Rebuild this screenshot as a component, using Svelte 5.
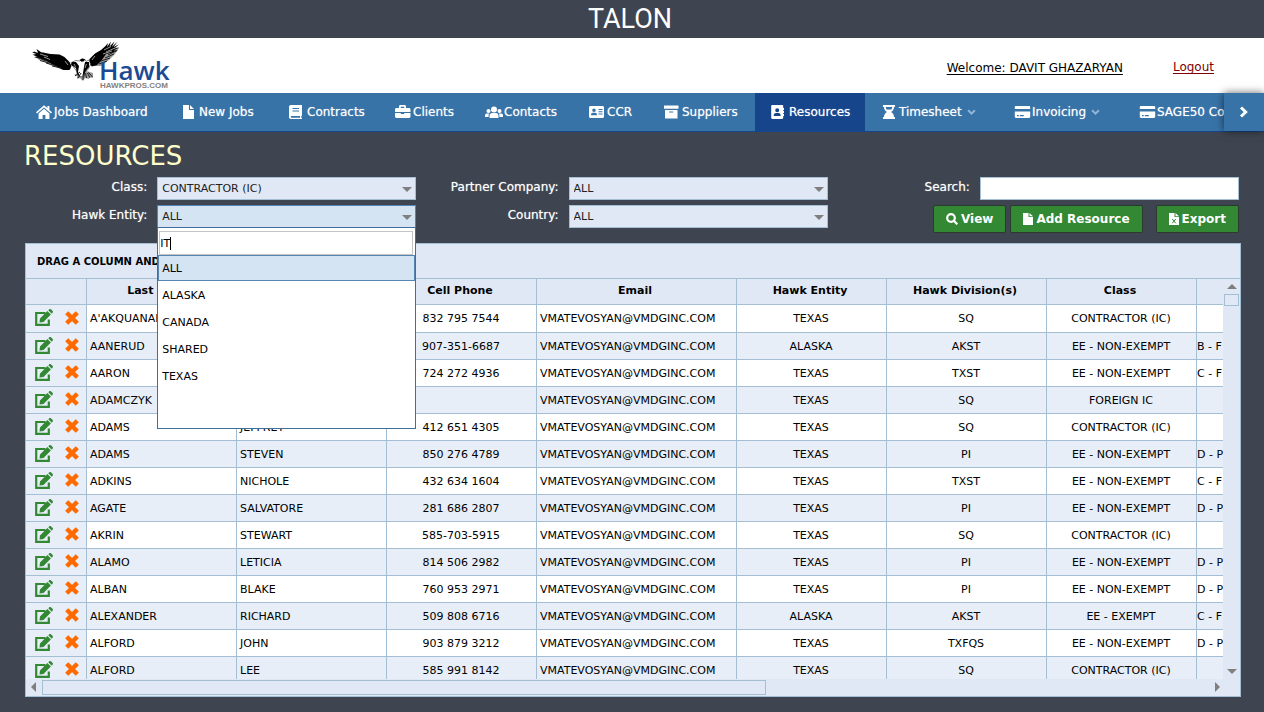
<script>
  const nav = [
    { label: 'Jobs Dashboard', icon: 'home' },
    { label: 'New Jobs', icon: 'file' },
    { label: 'Contracts', icon: 'book' },
    { label: 'Clients', icon: 'briefcase' },
    { label: 'Contacts', icon: 'users' },
    { label: 'CCR', icon: 'idcard' },
    { label: 'Suppliers', icon: 'archive' },
    { label: 'Resources', icon: 'address', active: true },
    { label: 'Timesheet', icon: 'hourglass', menu: true },
    { label: 'Invoicing', icon: 'card', menu: true },
    { label: 'SAGE50 Connector', icon: 'card' }
  ];

  const entities = ['ALL', 'ALASKA', 'CANADA', 'SHARED', 'TEXAS'];
  const email = 'VMATEVOSYAN@VMDGINC.COM';
  const IC = 'CONTRACTOR (IC)';
  const NE = 'EE - NON-EXEMPT';

  const rows = [
    ["A'AKQUANAHANN", '', '832 795 7544', 'TEXAS', 'SQ', IC, ''],
    ['AANERUD', '', '907-351-6687', 'ALASKA', 'AKST', NE, 'B - F'],
    ['AARON', '', '724 272 4936', 'TEXAS', 'TXST', NE, 'C - F'],
    ['ADAMCZYK', '', '', 'TEXAS', 'SQ', 'FOREIGN IC', ''],
    ['ADAMS', 'JEFFREY', '412 651 4305', 'TEXAS', 'SQ', IC, ''],
    ['ADAMS', 'STEVEN', '850 276 4789', 'TEXAS', 'PI', NE, 'D - P'],
    ['ADKINS', 'NICHOLE', '432 634 1604', 'TEXAS', 'TXST', NE, 'C - F'],
    ['AGATE', 'SALVATORE', '281 686 2807', 'TEXAS', 'PI', NE, 'D - P'],
    ['AKRIN', 'STEWART', '585-703-5915', 'TEXAS', 'SQ', IC, ''],
    ['ALAMO', 'LETICIA', '814 506 2982', 'TEXAS', 'PI', NE, 'D - P'],
    ['ALBAN', 'BLAKE', '760 953 2971', 'TEXAS', 'PI', NE, 'D - P'],
    ['ALEXANDER', 'RICHARD', '509 808 6716', 'ALASKA', 'AKST', 'EE - EXEMPT', 'C - F'],
    ['ALFORD', 'JOHN', '903 879 3212', 'TEXAS', 'TXFQS', NE, 'D - P'],
    ['ALFORD', 'LEE', '585 991 8142', 'TEXAS', 'SQ', IC, '']
  ];

  let filter = $state('IT');
</script>

{#snippet icon(name)}
  <svg class="icon" viewBox="0 0 18 16" aria-hidden="true">
    {#if name === 'home'}
      <path d="M9 1.2 1 8.2l1 1.2 7-6 7 6 1-1.2-2.600-2.300V2h-2v2.100z" />
      <path d="M9 4.800 3.600 9.400V15h4v-4h2.800v4h4V9.400z" />
    {:else if name === 'file'}
      <path d="M3 1h6v5h5v9H3zM10 1l4 4h-4z" />
    {:else if name === 'book'}
      <path fill-rule="evenodd" d="M3 1h11v10.600l-.7.6v1.600l.7.4v.8H3c-1.400 0-2-1-2-2V3c0-1.200.7-2 2-2zm1.500 3v1H11V4zm0 2.500v1H11v-1zM3.500 12c-1 0-1 1.800 0 1.800H12V12z" />
    {:else if name === 'briefcase'}
      <path fill-rule="evenodd" d="M5 4V2.500C5 1.700 5.600 1 6.500 1h4c.9 0 1.500.7 1.500 1.500V4h3c1 0 1.500.6 1.500 1.500V8H1V5.500C1 4.600 1.600 4 2.500 4zm1.800 0h3.400V2.700H6.800zM1 9h5.800v1h3.400V9h6.300v3.600c0 .9-.6 1.400-1.500 1.400H2.500c-.9 0-1.500-.5-1.500-1.400z" />
    {:else if name === 'users'}
      <circle cx="9" cy="5.500" r="3" /><circle cx="3.500" cy="7" r="2" /><circle cx="14.500" cy="7" r="2" />
      <path d="M4.500 14v-2c0-2 1.300-3 2.500-3h4c1.200 0 2.500 1 2.500 3v2zM0 13v-1.500c0-1.400.9-2 2-2h2.300C3.700 10.200 3.600 11 3.600 13zM18 13v-1.500c0-1.400-.9-2-2-2h-2.300c.6.7.7 1.500.7 3.500z" />
    {:else if name === 'idcard'}
      <path fill-rule="evenodd" d="M2.500 2h12c.9 0 1.500.6 1.500 1.500v9c0 .9-.6 1.500-1.500 1.500h-12c-.9 0-1.500-.6-1.500-1.500v-9C1 2.600 1.600 2 2.500 2zM6 4.500a1.800 1.800 0 1 0 0 3.600 1.800 1.800 0 0 0 0-3.600zM3 11.200h6c0-1.600-.8-2.400-1.800-2.400H4.800C3.800 8.800 3 9.600 3 11.200zM10.500 5v1h4V5zm0 2.200v1h4v-1zm0 2.300v1h4v-1z" />
    {:else if name === 'archive'}
      <path fill-rule="evenodd" d="M1 1.500h14.500v3.200H1zM2 6h12.500v8.500H2zm4.200 1.500v1h4v-1z" />
    {:else if name === 'address'}
      <path fill-rule="evenodd" d="M2.500 1h9.500c.8 0 1.200.5 1.200 1.200V4h.8v2h-.8v1h.8v2h-.8v1h.8v2h-.8v1.800c0 .7-.4 1.200-1.200 1.200H2.500c-.8 0-1.300-.5-1.300-1.200V2.200C1.200 1.500 1.700 1 2.500 1zm4.700 3.200a2 2 0 1 0 0 4 2 2 0 0 0 0-4zM3.700 12h7c0-2-.8-3-2.200-3H5.900c-1.400 0-2.200 1-2.200 3z" />
    {:else if name === 'hourglass'}
      <path d="M3 1h12v2h-1c0 2.500-1.300 4-3 5 1.700 1 3 2.500 3 5h1v2H3v-2h1c0-2.500 1.300-4 3-5C5.300 7 4 5.500 4 3H3z" />
      <path class="cut" d="M5.800 3h6.400c0 1-.3 1.700-.7 2.400h-5C6.100 4.700 5.800 4 5.800 3z" />
    {:else if name === 'card'}
      <path fill-rule="evenodd" d="M3 2h13c.7 0 1.200.5 1.200 1.200V5H1.800V3.200C1.800 2.500 2.300 2 3 2zM1.800 7.500h15.400v5.300c0 .7-.5 1.200-1.200 1.200H3c-.7 0-1.200-.5-1.200-1.200zM4 11v1.200h1.700V11zm2.800 0v1.200h4V11z" />
    {/if}
  </svg>
{/snippet}

{#snippet chevron()}
  <svg class="chevron" viewBox="0 0 8 6" aria-hidden="true"><path d="M1 1l3 3 3-3" /></svg>
{/snippet}

<div class="page">
  <header class="brand">TALON</header>

  <div class="account">
    <svg class="logo" viewBox="32 40 140 50" role="img" aria-label="Hawk">
      <path class="soft" d="M34 55l5 5 6 2 5 3 6 2 7 3 8-1-2-6-14-7-12-4zM93 66l8 0 8-6 6-6 4-6-6-1-12 3-6 8zM74 75l9-5 10 3 0 5-4-1 0 2-4-1-2 3-3-3-3 1 0-3z" />
      <path d="M33 51.500l5 1.200-1.500-3.700 5 3.500 9 1.500 9 .5 5 2.500 5 5 2 4-2 4-6 0-9-4.500-9-5-6-2-5.500-1.300 3.500-.8-5-1.600 3.800-.8-4.700-1.800 4-.4z" />
      <path d="M89 64l.5-5 5.500-5.500 6-3.500 4-3.500 3-3.500-1 4 4-5.500-1.500 5 5-5-2.500 5.200 5.500-5-4 5.500 5.500-3-5 4.500 5.500-1.500-6 3.300 4.500 0-6 2.300-6 1.200-2 3-3 4-4 4-5 1.500z" />
      <path class="body" d="M71 62.500l5-2 4 .5 2-2 3 .5 1 2 3-1.500 1.500 4-2 5-4 3-2 5-4-1-2-5-3-4z" />
      <path d="M72 62l4 0 3 4-1 6 2 5-3-3-1-6-5-3zM85 62l4 0 0 5-4 5-1 6-1-5 1-6zM79.500 60l2.500-1.500 3 .7-1 2-2.500.5z" />
      <path class="mark" d="M75 76l5-4M78 78l3-5M83 80l.2-6M86.500 78l-1-5M90 78l-2.500-5M92.500 77l-4-4.500M37 57l9 4M40 60.500l9 2.500M46 63l9 2.500M52 66l9 2M101 61l9-3M99 64l8-3M105 58l9-4M108 55l9-4.500" />
      <path class="plume" d="M40 54l8 2.500M44 57l6 2.500M74 64l1.500 3M86.500 64l-1.500 4M104 50l7-3.500M106 52l9-4M103 54l9-3M92 60l3-4M65 61l3 4" />
      <text class="name" x="99" y="80">Hawk</text>
      <text class="site" x="100" y="88">HAWKPROS.COM</text>
    </svg>
    <a class="welcome" href="#profile">Welcome: DAVIT GHAZARYAN</a>
    <a class="logout" href="#logout">Logout</a>
  </div>

  <nav>
    <div class="items">
      {#each nav as item}
        <a href="#{item.icon}" class:active={item.active}>
          {@render icon(item.icon)}<span>{item.label}</span>
          {#if item.menu}{@render chevron()}{/if}
        </a>
      {/each}
    </div>
    <button class="more" aria-label="Scroll menu">
      <svg viewBox="0 0 10 12" aria-hidden="true"><path d="M2 1.500L6.700 6 2 10.500" /></svg>
    </button>
  </nav>

  <main>
    <h1>RESOURCES</h1>

    <div class="filters">
      <div class="field">
        <label for="class">Class:</label>
        <div class="combo"><select id="class"><option>CONTRACTOR (IC)</option></select></div>
      </div>
      <div class="field">
        <label for="partner">Partner Company:</label>
        <div class="combo"><select id="partner"><option>ALL</option></select></div>
      </div>
      <div class="field">
        <label for="search">Search:</label>
        <input id="search" type="text" />
      </div>
      <div class="field">
        <label for="entity">Hawk Entity:</label>
        <div class="combo open">
          <select id="entity"><option>ALL</option></select>
          <div class="popup">
            <div class="find">
              <input type="text" aria-label="Filter entities" bind:value={filter} /><span class="caret"></span>
            </div>
            <ul role="listbox" aria-label="Hawk Entity">
              {#each entities as entity, i}
                <li role="option" aria-selected={i === 0}>{entity}</li>
              {/each}
            </ul>
          </div>
        </div>
      </div>
      <div class="field">
        <label for="country">Country:</label>
        <div class="combo"><select id="country"><option>ALL</option></select></div>
      </div>
      <div class="actions">
        <button>
          <svg viewBox="0 0 12 12" aria-hidden="true"><circle class="lens" cx="5" cy="5" r="3.800" /><path class="lens" d="M7.800 7.800l3.500 3.500" /></svg>View
        </button>
        <button>
          <svg class="sheet" viewBox="0 0 10 12" aria-hidden="true"><path d="M0 0h5.500v4H10v8H0zM6.500 0L10 3.200H6.500z" /></svg>Add Resource
        </button>
        <button class="export">
          <svg class="sheet" viewBox="0 0 10 12" aria-hidden="true"><path d="M0 0h5.500v4H10v8H0zM6.500 0L10 3.200H6.500z" /><path class="x" d="M3.200 6l3.600 4.300M6.800 6l-3.600 4.300" /></svg>Export
        </button>
      </div>
    </div>

    <section class="grid">
      <div class="group">DRAG A COLUMN AND DROP IT HERE TO GROUP BY THAT COLUMN</div>
      <div class="body">
        <div class="view">
          <table>
            <colgroup>
              <col class="tools" /><col class="mid" /><col class="mid" /><col class="mid" /><col class="wide" />
              <col class="mid" /><col class="division" /><col class="mid" /><col class="mid" />
            </colgroup>
            <thead>
              <tr>
                <th aria-label="Actions"></th>
                <th>Last Name</th><th>First Name</th><th>Cell Phone</th><th>Email</th>
                <th>Hawk Entity</th><th>Hawk Division(s)</th><th>Class</th><th></th>
              </tr>
            </thead>
            <tbody>
              {#each rows as [last, first, phone, entity, division, kind, plan]}
                <tr>
                  <td class="tools">
                    <div>
                      <button class="edit" aria-label="Edit">
                        <svg viewBox="0 0 18 17" aria-hidden="true">
                          <path class="box" d="M10.500 4H1.200v11.800h12.600v-5.300" />
                          <path d="M5 9.500L12.400 2.100l3.500 3.500L8.500 13 4.500 13.500zM13.300 1.200L14.300.2q.8-.6 1.600.1L17.700 2q.6.8 0 1.500L16.800 4.700z" />
                        </svg>
                      </button>
                      <button class="remove" aria-label="Delete">
                        <svg viewBox="0 0 14 14" aria-hidden="true"><path d="M1.700 1.700l10.600 10.600M12.300 1.700L1.700 12.300" /></svg>
                      </button>
                    </div>
                  </td>
                  <td>{last}</td><td>{first}</td><td class="c">{phone}</td><td>{email}</td>
                  <td class="c">{entity}</td><td class="c">{division}</td><td class="c">{kind}</td><td class="plan">{plan}</td>
                </tr>
              {/each}
            </tbody>
          </table>
        </div>
        <div class="vbar">
          <button class="up" aria-label="Scroll up"></button>
          <div class="thumb"></div>
          <button class="down" aria-label="Scroll down"></button>
        </div>
      </div>
      <div class="hbar">
        <button class="left" aria-label="Scroll left"></button>
        <div class="track"><div class="thumb"></div></div>
        <button class="right" aria-label="Scroll right"></button>
      </div>
    </section>
  </main>
</div>

<style>
  :global(body) { background: #3f4550; }
  * { box-sizing: border-box; }
  .page {
    --line: #a4bed4;
    --panel: #e0e8f5;
    height: 100vh;
    display: flex;
    flex-direction: column;
    background: #3f4550;
    font: 11px Verdana, "DejaVu Sans", sans-serif;
    color: #000;
  }
  button { border: 0; padding: 0; background: none; font: inherit; color: inherit; }
  a { color: inherit; }

  .brand {
    height: 38px;
    line-height: 38px;
    text-align: center;
    color: #fff;
    font-family: Roboto, sans-serif;
    font-size: 27px;
    padding-right: 4px;
  }
  .account {
    height: 55px;
    padding: 2px 50px 0 32px;
    display: flex;
    align-items: flex-start;
    background: #fff;
    font-size: 12px;
    line-height: 16px;
  }
  .logo { width: 140px; height: 50px; margin-right: auto; }
  .logo .soft { fill: #9a9a9a; }
  .logo .body { fill: #fff; stroke: #333; stroke-width: 0.6; }
  .logo .mark { fill: none; stroke: #222; stroke-width: 1; }
  .logo .plume { fill: none; stroke: #bbb; stroke-width: 0.8; }
  .name { font: 600 26px "Open Sans", sans-serif; fill: #1c4a94; }
  .site { font: bold 8px "Liberation Sans", sans-serif; fill: #857f80; }
  .welcome, .logout { text-underline-offset: 2px; }
  .welcome { margin: 20px 50px 0 0; }
  .logout { margin-top: 19px; color: #800000; }

  nav {
    height: 39px;
    flex: none;
    display: flex;
    background: #3873a8;
    border-bottom: 1px solid #16458c;
    color: #fff;
    font-size: 12px;
    text-shadow: 0 0 1px #fff9;
  }
  .items {
    flex: 1;
    min-width: 0;
    overflow: hidden;
    padding-left: 20px;
    display: grid;
    grid-template-columns: 145px 108px 106px 91px 103px 75px 107px 110px 133px 125px 170px;
  }
  .items a {
    display: flex;
    align-items: center;
    padding: 0 0 0 15px;
    text-decoration: none;
    white-space: nowrap;
  }
  .items a.active { background: #16458c; }
  .icon { width: 18px; height: 16px; margin-right: 1px; flex: none; fill: #fff; }
  .icon .cut { fill: #3873a8; }
  .chevron { width: 9px; height: 7px; margin-left: 5px; fill: none; stroke: #8fb6d8; stroke-width: 1.8; }
  .more {
    width: 40px;
    display: grid;
    place-items: center;
    box-shadow: 0 0 8px #0009;
    background: #3873a8;
  }
  .more svg { width: 10px; height: 12px; fill: none; stroke: #fff; stroke-width: 3; }

  main { flex: 1; min-height: 0; display: flex; flex-direction: column; }
  h1 {
    margin: 0;
    padding: 3px 24px 0;
    font-size: 26px;
    font-weight: normal;
    line-height: 42px;
    color: #ffffcc;
  }
  .filters {
    display: grid;
    grid-template-columns: repeat(3, 1fr);
    row-gap: 5px;
    padding: 0 25px 10px 5px;
    align-items: start;
  }
  .field { display: grid; grid-template-columns: 1fr 63%; column-gap: 10px; }
  .field label {
    line-height: 21px;
    text-align: right;
    color: #fff;
    font-size: 12px;
    text-shadow: 0 0 1px #fff9;
  }
  .combo { position: relative; }
  .combo::after {
    content: "";
    position: absolute;
    right: 4px;
    top: 10px;
    border: 5px solid transparent;
    border-top-color: #7f7f7f;
    border-bottom: 0;
    pointer-events: none;
  }
  select, #search {
    display: block;
    width: 100%;
    height: 23px;
    margin: 0;
    padding: 0 4px;
    border: 1px solid var(--line);
    border-radius: 0;
    background: var(--panel);
    appearance: none;
    font: inherit;
    color: #222;
  }
  #search { background: #fff; }
  .open select { background: #d5e4f3; border-color: #5585b0; }
  .popup {
    position: absolute;
    z-index: 2;
    top: 22px;
    left: 0;
    right: 0;
    height: 202px;
    background: #fff;
    border: 1px solid #3f7099;
  }
  .find {
    display: flex;
    align-items: center;
    height: 24px;
    margin: 3px 2px 0 1px;
    border: 1px solid #c4c4c4;
  }
  .find input {
    field-sizing: content;
    border: 0;
    padding: 0;
    outline: 0;
    font: inherit;
    color: #000;
  }
  .caret { width: 1px; height: 13px; background: #000; }
  ul { margin: 0; padding: 0; list-style: none; }
  li { height: 25px; margin-bottom: 2px; border: 1px solid transparent; line-height: 25px; padding-left: 3px; }
  li[aria-selected="true"] { height: 26px; margin-bottom: 1px; background: #d5e4f3; border-color: #5585b0; }

  .actions { display: flex; justify-content: flex-end; gap: 4px; }
  .actions button {
    height: 28px;
    display: flex;
    align-items: center;
    gap: 3px;
    padding: 0 12px;
    border: 1px solid #2b3a2d;
    border-radius: 2px;
    background: #338833;
    color: #fff;
    font-size: 12px;
    font-weight: bold;
  }
  .actions .export { margin-left: 9px; }
  .actions svg { width: 12px; height: 12px; fill: #fff; }
  .actions svg.sheet { width: 10px; }
  .actions .lens { fill: none; stroke: #fff; stroke-width: 2.200; }
  .actions .x { fill: none; stroke: #338833; stroke-width: 1; }

  .grid {
    flex: 1;
    min-height: 0;
    display: flex;
    flex-direction: column;
    margin: 0 23px 15px 25px;
    border: 1px solid var(--line);
    background: var(--panel);
  }
  .group {
    flex: none;
    height: 34px;
    line-height: 35px;
    padding-left: 11px;
    font-size: 10px;
    font-weight: bold;
  }
  .body { flex: 1; min-height: 0; display: flex; border-top: 1px solid var(--line); }
  .view { flex: 1; min-width: 0; overflow: hidden; }
  table { width: 1321px; table-layout: fixed; border-collapse: separate; border-spacing: 0; }
  col.tools { width: 61px; }
  col.mid { width: 150px; }
  col.wide { width: 200px; }
  col.division { width: 160px; }
  th, td {
    height: 27px;
    padding: 0 3px;
    border: solid var(--line);
    border-width: 0 1px 1px 0;
    overflow: hidden;
    white-space: nowrap;
    text-align: left;
  }
  th { height: 26px; padding: 0 3px 2px 0; text-align: center; background: var(--panel); }
  tbody tr { background: #fff; }
  tbody tr:first-child td { height: 28px; }
  tbody tr:nth-child(even) { background: #e7eef8; }
  td.c { padding: 0 3px 0 2px; text-align: center; }
  td.plan { padding: 0; }
  td.tools { padding: 0 0 2px; background: #e7eef8; }
  td.tools div { display: flex; align-items: center; padding-left: 9px; gap: 12px; }
  td.tools svg { display: block; }
  .edit svg { width: 18px; height: 17px; fill: #338833; }
  .edit .box { fill: none; stroke: #338833; stroke-width: 2.2; }
  .remove svg { width: 14px; height: 14px; fill: none; stroke: #ff6a00; stroke-width: 4.400; }

  .vbar { width: 17px; display: flex; flex-direction: column; align-items: center; padding: 5px 0; }
  .vbar .thumb { width: 15px; height: 12px; margin: 5px 0 auto; border: 1px solid var(--line); }
  .up, .down, .left, .right { border: 5px solid transparent; width: 0; height: 0; }
  .up { border-bottom-color: #7f7f7f; border-top: 0; }
  .down { border-top-color: #7f7f7f; border-bottom: 0; }
  .left { border-right-color: #7f7f7f; border-left: 0; }
  .right { border-left-color: #7f7f7f; border-right: 0; }
  .hbar { flex: none; height: 17px; display: flex; align-items: center; padding: 0 20px 1px 5px; }
  .track { flex: 1; padding: 0 6px; }
  .hbar .thumb { width: 62%; height: 15px; border: 1px solid var(--line); }
</style>
